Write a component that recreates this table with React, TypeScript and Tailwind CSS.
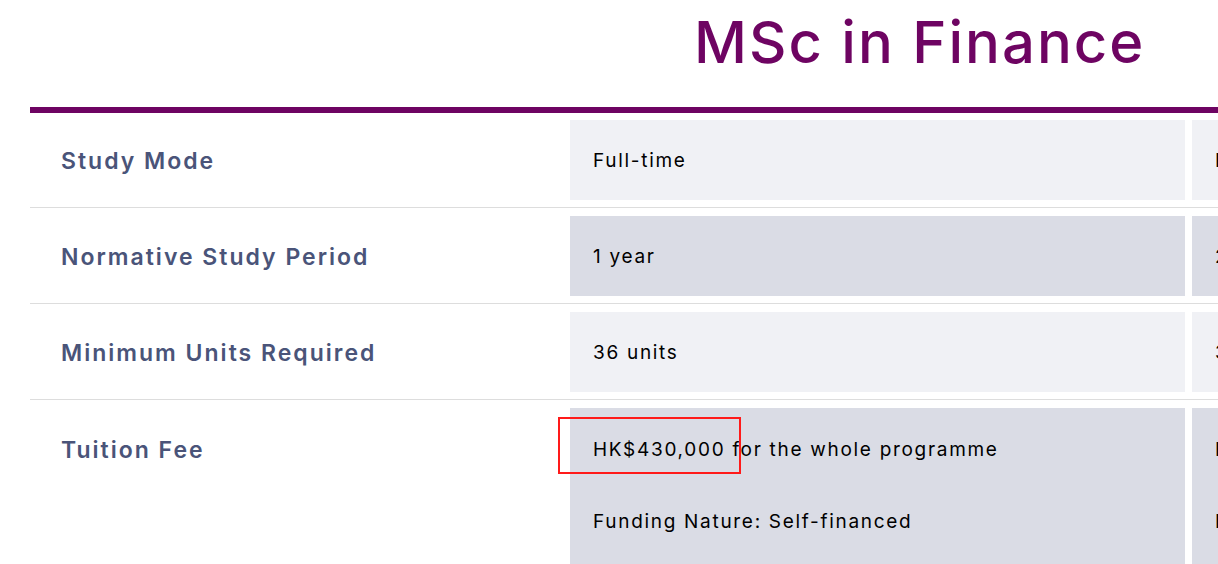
import React from "react";

const font = { fontFamily: '"Inter", "Noto Sans", sans-serif' };

type Row = { label: string; a: string[]; b: string[]; shade: "light" | "dark" };

const rows: Row[] = [
  { label: "Study Mode", a: ["Full-time"], b: ["Part-time"], shade: "light" },
  { label: "Normative Study Period", a: ["1 year"], b: ["2 years"], shade: "dark" },
  { label: "Minimum Units Required", a: ["36 units"], b: ["36 units"], shade: "light" },
  {
    label: "Tuition Fee",
    a: ["HK$430,000 for the whole programme", "Funding Nature: Self-financed"],
    b: ["HK$430,000 for the whole programme", "Funding Nature: Self-financed"],
    shade: "dark",
  },
];

function Cell({ lines, shade, multi }: { lines: string[]; shade: string; multi: boolean }) {
  const bg = shade === "light" ? "bg-[#f0f1f5]" : "bg-[#dadce5]";
  if (!multi) {
    return (
      <div className={`${bg} h-[80px] flex items-center pt-[3px] pl-[23px] text-[19px] tracking-[1.7px] text-black whitespace-nowrap overflow-hidden`}>
        {lines[0]}
      </div>
    );
  }
  return (
    <div className={`${bg} h-[170px] pt-[27px] pl-[23px] text-[19px] tracking-[1.7px] text-black whitespace-nowrap overflow-hidden flex flex-col gap-[42px]`}>
      {lines.map((l) => (
        <div key={l} className="leading-[30px]">{l}</div>
      ))}
    </div>
  );
}

export default function App() {
  return (
    <div className="relative w-[1218px] h-[564px] overflow-hidden bg-white" style={font}>
      <div className="pl-[694px] pt-[2px] h-[107px]">
        <h1 className="text-[58px] leading-[80px] font-medium tracking-[2px] text-[#6e0462] whitespace-nowrap">MSc in Finance</h1>
      </div>
      <div className="ml-[30px]">
        <div className="h-[6px] bg-[#6e0462]" />
        {rows.map((r, i) => (
          <div
            key={r.label}
            className={`grid grid-cols-[533px_615px_615px] gap-x-[7px] ${i === 0 ? "pt-[7px]" : "pt-[8px]"} pb-[7px] border-b border-[#dddddd]`}
          >
            <div className={`pl-[31px] text-[23px] font-semibold tracking-[2px] text-[#4a5479] ${i === 3 ? "pt-[27px] leading-[30px]" : "flex items-center pt-[3px] h-[80px]"}`}>
              {r.label}
            </div>
            <Cell lines={r.a} shade={r.shade} multi={i === 3} />
            <Cell lines={r.b} shade={r.shade} multi={i === 3} />
          </div>
        ))}
      </div>
      <div className="absolute left-[558px] top-[417px] w-[183px] h-[57px] border-2 border-[#ff1a1a]" />
    </div>
  );
}
